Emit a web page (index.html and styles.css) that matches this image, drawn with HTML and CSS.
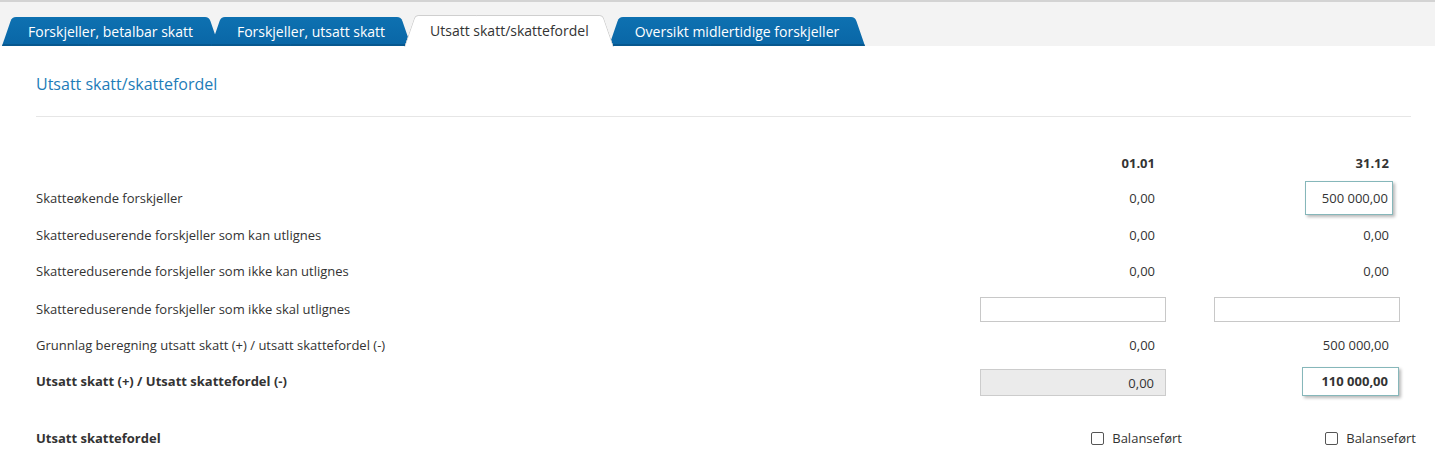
FILE: index.html
```html
<!DOCTYPE html>
<html lang="no">
<head>
<meta charset="utf-8">
<title>Utsatt skatt/skattefordel</title>
<link rel="stylesheet" href="styles.css">
</head>
<body>
<div class="tabbar">
  <a class="tab">Forskjeller, betalbar skatt</a>
  <a class="tab">Forskjeller, utsatt skatt</a>
  <a class="tab active">Utsatt skatt/skattefordel</a>
  <a class="tab">Oversikt midlertidige forskjeller</a>
</div>
<main class="content">
  <h1 class="title">Utsatt skatt/skattefordel</h1>
  <div class="rule"></div>
  <div class="table">
    <div class="row head">
      <div class="label"></div>
      <div class="cell">01.01</div>
      <div class="cell">31.12</div>
    </div>
    <div class="row">
      <div class="label">Skatteøkende forskjeller</div>
      <div class="cell">0,00</div>
      <div class="cell"><span class="hl hl-1">500 000,00</span></div>
    </div>
    <div class="row shift-1">
      <div class="label">Skattereduserende forskjeller som kan utlignes</div>
      <div class="cell">0,00</div>
      <div class="cell">0,00</div>
    </div>
    <div class="row">
      <div class="label">Skattereduserende forskjeller som ikke kan utlignes</div>
      <div class="cell">0,00</div>
      <div class="cell">0,00</div>
    </div>
    <div class="row shift-2">
      <div class="label">Skattereduserende forskjeller som ikke skal utlignes</div>
      <div class="cell"><span class="input"></span></div>
      <div class="cell"><span class="input"></span></div>
    </div>
    <div class="row">
      <div class="label">Grunnlag beregning utsatt skatt (+) / utsatt skattefordel (-)</div>
      <div class="cell">0,00</div>
      <div class="cell">500 000,00</div>
    </div>
    <div class="row bold">
      <div class="label">Utsatt skatt (+) / Utsatt skattefordel (-)</div>
      <div class="cell"><span class="input readonly">0,00</span></div>
      <div class="cell"><span class="hl hl-2">110 000,00</span></div>
    </div>
    <div class="row check-row bold">
      <div class="label">Utsatt skattefordel</div>
      <div class="cell"><span class="check"><span class="box"></span><span class="check-text">Balanseført</span></span></div>
      <div class="cell"><span class="check"><span class="box"></span><span class="check-text">Balanseført</span></span></div>
    </div>
  </div>
</main>
</body>
</html>
```

FILE: styles.css
```css
html, body {
  margin: 0;
  padding: 0;
  background: #ffffff;
}

body {
  font-family: "Open Sans", "DejaVu Sans", sans-serif;
  color: #333333;
  font-size: 13px;
}

/* ---------- tabs ---------- */
.tabbar {
  height: 46px;
  box-sizing: border-box;
  border-top: 2px solid #d3d3d3;
  background: #f3f3f3;
  display: flex;
  align-items: flex-end;
  padding-left: 2px;
}

.tab {
  position: relative;
  z-index: 1;
  height: 29px;
  padding: 0 26px 1px;
  box-sizing: border-box;
  margin-left: -8px;
  display: flex;
  align-items: center;
  color: #ffffff;
  font-size: 14px;
  white-space: nowrap;
  cursor: pointer;
}

.tab:first-child {
  margin-left: 0;
}

.tab::before,
.tab::after {
  content: "";
  position: absolute;
  top: 0;
  bottom: 0;
  width: 60%;
  z-index: -1;
  background: linear-gradient(#0e71b1, #0966a6);
  box-shadow: inset 0 -2px 0 #07588f;
}

.tab::before {
  left: 0;
  transform: skewX(-19deg);
  transform-origin: bottom left;
  border-radius: 4px 0 0 0;
}

.tab::after {
  right: 0;
  transform: skewX(19deg);
  transform-origin: bottom right;
  border-radius: 0 4px 0 0;
}

.tab.active {
  z-index: 3;
  height: 31px;
  color: #333333;
  margin-left: -7px;
  margin-right: 2px;
  padding-bottom: 1px;
}

.tab.active::before,
.tab.active::after {
  background: #ffffff;
  box-shadow: none;
  border-top: 1px solid #cfcfcf;
  bottom: -1px;
}

.tab.active::before {
  border-left: 1px solid #cfcfcf;
}

.tab.active::after {
  border-right: 1px solid #cfcfcf;
}

/* ---------- content ---------- */
.content {
  padding: 0 24px 0 36px;
}

.title {
  margin: 0;
  padding-top: 27px;
  font-size: 16px;
  line-height: 22px;
  font-weight: 400;
  color: #1d7cb8;
}

.rule {
  margin-top: 21px;
  height: 1px;
  background: #e6e6e6;
}

.table {
  margin-top: 28px;
  padding-right: 11px;
}

.row {
  display: grid;
  grid-template-columns: 1fr 186px 186px;
  column-gap: 48px;
  height: 36px;
  align-items: center;
}

.row.head {
  height: 35px;
  font-weight: 700;
}

.row.shift-1 {
  margin-top: 1px;
}

.row.shift-2 {
  margin-top: 2px;
}

.row.bold .label {
  font-weight: 700;
}

.label {
  white-space: nowrap;
}

.cell {
  display: flex;
  justify-content: flex-end;
  align-items: center;
  padding-right: 11px;
  white-space: nowrap;
}

.input {
  box-sizing: border-box;
  width: 186px;
  height: 25px;
  margin-right: -11px;
  border: 1px solid #c8c8c8;
  background: #ffffff;
  display: flex;
  align-items: center;
  justify-content: flex-end;
  padding-right: 11px;
}

.input.readonly {
  height: 27px;
  margin-top: 3px;
  background: #ebebeb;
  border-color: #cccccc;
  font-weight: 400;
}

.hl {
  box-sizing: border-box;
  display: flex;
  align-items: center;
  justify-content: flex-end;
  border: 1px solid #86b7ba;
  background: #ffffff;
  box-shadow: 2px 2px 3px rgba(0, 0, 0, 0.28);
}

.hl-1 {
  height: 34px;
  padding: 0 4px 0 16px;
  margin-right: -4px;
  margin-top: -1px;
}

.hl-2 {
  height: 29px;
  padding: 0 10px 0 18px;
  margin-right: -10px;
  font-weight: 700;
}

.check-row {
  margin-top: 21px;
}

.check-row .cell {
  padding-right: 0;
  margin-right: -16px;
}

.check {
  display: flex;
  align-items: center;
  gap: 8px;
  font-weight: 400;
}

.box {
  box-sizing: border-box;
  width: 13px;
  height: 13px;
  border: 1px solid #555555;
  border-radius: 2px;
  background: #ffffff;
}
```
